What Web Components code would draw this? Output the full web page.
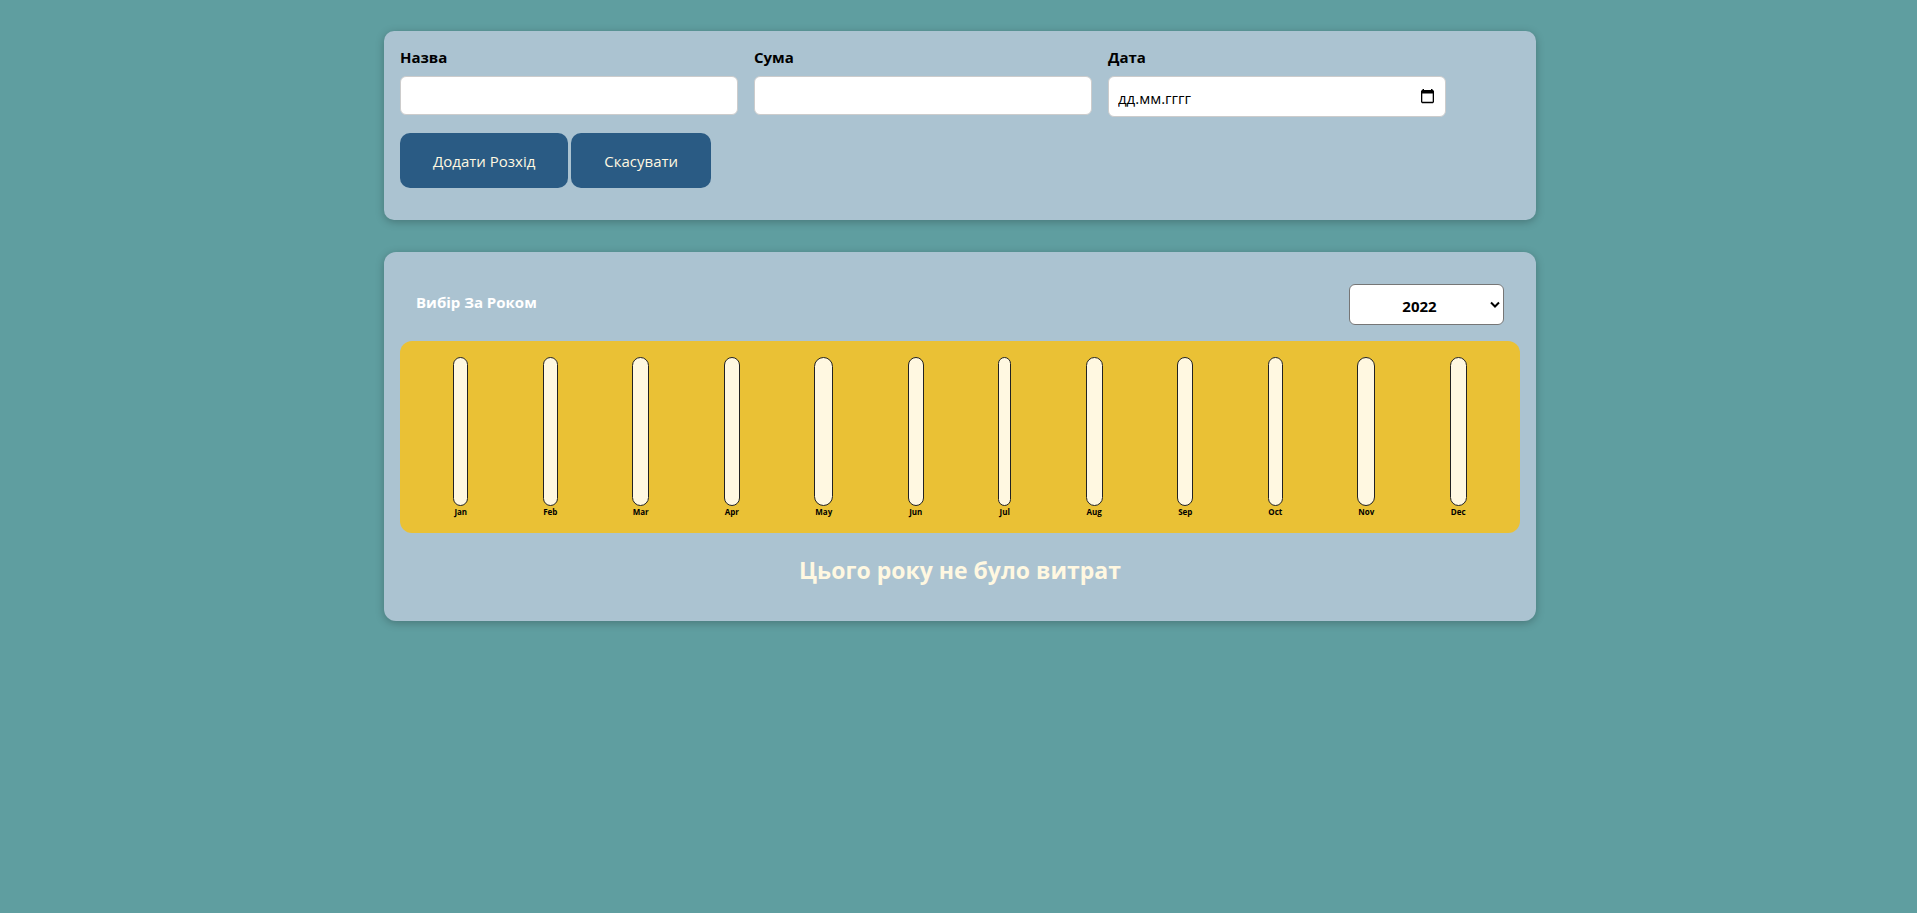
<!DOCTYPE html>
<html lang="uk">
<head>
<meta charset="utf-8">
<meta name="viewport" content="width=device-width, initial-scale=1">
<title>Витрати</title>
<style>
  body { margin: 0; background: #5f9ea0; font: 15px/24px "Open Sans", "Noto Sans", sans-serif; color: #000; }
</style>
</head>
<body>
<expenses-app></expenses-app>
<script>
const define = (name, html, setup) => {
  const template = document.createElement('template');
  template.innerHTML = html;
  customElements.define(name, class extends HTMLElement {
    connectedCallback() {
      if (this.shadowRoot) return;
      const root = this.attachShadow({ mode: 'open' });
      root.append(template.content.cloneNode(true));
      if (setup) setup(this, root);
    }
  });
};

define('ui-card', `
  <style>
    :host { display: block; box-sizing: border-box; padding: 16px; border-radius: 10px;
      background: #abc3d1; box-shadow: 0 2px 8px rgba(0, 0, 0, .25); }
  </style>
  <slot></slot>`);

define('text-field', `
  <style>
    :host { display: block; }
    label { display: block; margin-bottom: 8px; font-weight: 700; line-height: 21px; }
    input { display: block; box-sizing: border-box; width: 100%; height: 39px; padding: 8px;
      border: 1px solid #ccc; border-radius: 6px; background: #fff; font: inherit; color: #000; }
  </style>
  <label for="field"></label>
  <input id="field">`, (host, root) => {
    root.querySelector('label').textContent = host.getAttribute('label');
    root.querySelector('input').type = host.getAttribute('type') || 'text';
  });

define('date-field', `
  <style>
    :host { display: block; }
    label { display: block; margin-bottom: 8px; font-weight: 700; line-height: 21px; }
    .box { display: flex; align-items: center; box-sizing: border-box; height: 41px; padding: 0 10px 0 9px;
      border: 1px solid #ccc; border-radius: 6px; background: #fff; }
    input { flex: 1; min-width: 0; padding: 2px 0 0; border: 0; background: none; outline: none;
      font: inherit; color: #000; }
    input::placeholder { color: #000; opacity: 1; }
    button { display: flex; padding: 0; border: 0; background: none; cursor: pointer; }
  </style>
  <label for="field">Дата</label>
  <div class="box">
    <input id="field" type="text" inputmode="numeric" placeholder="дд.мм.гггг">
    <button type="button" aria-label="Календар">
      <svg width="16" height="17" viewBox="0 0 16 17" fill="none"><path d="M3.500 1h1.500v1h7v-1h1.500v1h.500l1 1v11l-1 1.300h-11l-1-1.300v-11l1-1h.500zM3.300 5.500v8.300h10.400v-8.300z" fill="#000" fill-rule="evenodd"/></svg>
    </button>
  </div>`);

define('action-button', `
  <style>
    :host { display: block; }
    button { display: block; height: 55px; padding: 0 33px; border: 0; border-radius: 10px;
      background: #2a5b84; color: #fff8e1; font: inherit; cursor: pointer; }
  </style>
  <button type="button"><slot></slot></button>`);

define('expense-form', `
  <style>
    :host { display: block; }
    form { display: grid; gap: 16px; padding-bottom: 16px; }
    .fields { display: grid; grid-template-columns: repeat(auto-fit, minmax(240px, 338px)); gap: 16px; }
    .actions { display: flex; gap: 3px; }
  </style>
  <form>
    <div class="fields">
      <text-field label="Назва"></text-field>
      <text-field label="Сума" type="number"></text-field>
      <date-field></date-field>
    </div>
    <div class="actions">
      <action-button>Додати Розхід</action-button>
      <action-button>Скасувати</action-button>
    </div>
  </form>`);

define('year-filter', `
  <style>
    :host { display: flex; justify-content: space-between; align-items: center; padding: 16px; }
    label { color: #fff; font-weight: 700; padding-bottom: 6px; }
    .pick { display: grid; align-items: center; }
    select, svg { grid-area: 1 / 1; }
    select { appearance: none; width: 155px; height: 41px; padding: 2px 14px 0 0; border: 1px solid #767676;
      border-radius: 6px; background: #fff; color: #000; font: inherit; font-weight: 700;
      text-align: center; text-align-last: center; }
    svg { justify-self: end; margin-right: 4px; pointer-events: none; }
  </style>
  <label for="year">Вибір За Роком</label>
  <div class="pick">
    <select id="year">
      <option selected>2022</option><option>2021</option><option>2020</option><option>2019</option>
    </select>
    <svg width="10" height="8" viewBox="0 0 10 8" fill="none" stroke="#000" stroke-width="2"><path d="M1 1.500l4 4 4-4"/></svg>
  </div>`);

define('chart-bar', `
  <style>
    :host { display: flex; flex-direction: column; align-items: center; height: 160px; }
    .bar { flex: 1; box-sizing: border-box; width: 100%; border: 1px solid #222; border-radius: 12px; background: #fff8e1; }
    .label { font-size: 8px; line-height: 11px; font-weight: 700; }
  </style>
  <div class="bar"></div>
  <div class="label"><slot></slot></div>`, (host) => {
    host.style.width = host.getAttribute('width') + 'px';
  });

define('expense-chart', `
  <style>
    :host { display: flex; justify-content: space-around; padding: 16px; border-radius: 12px; background: #eac135; }
  </style>`, (host, root) => {
    const months = { Jan: 15, Feb: 15, Mar: 17, Apr: 16, May: 19, Jun: 16, Jul: 13, Aug: 17, Sep: 16, Oct: 15, Nov: 18, Dec: 17 };
    for (const [month, width] of Object.entries(months)) {
      const bar = document.createElement('chart-bar');
      bar.setAttribute('width', width);
      bar.textContent = month;
      root.append(bar);
    }
  });

define('expenses-app', `
  <style>
    :host { display: grid; grid-template-columns: minmax(0, 24rem) min(100%, 72rem) 1fr; row-gap: 32px; padding: 31px 0; }
    ui-card { grid-column: 2; }
    h2 { margin: 0; padding: 21px 0 35px; text-align: center; font-size: 23px; line-height: 32px; color: #fff8e1; }
    ui-card.list { padding-bottom: 0; border-radius: 12px; }
  </style>
  <ui-card><expense-form></expense-form></ui-card>
  <ui-card class="list">
    <year-filter></year-filter>
    <expense-chart></expense-chart>
    <h2>Цього року не було витрат</h2>
  </ui-card>`);
</script>
</body>
</html>
